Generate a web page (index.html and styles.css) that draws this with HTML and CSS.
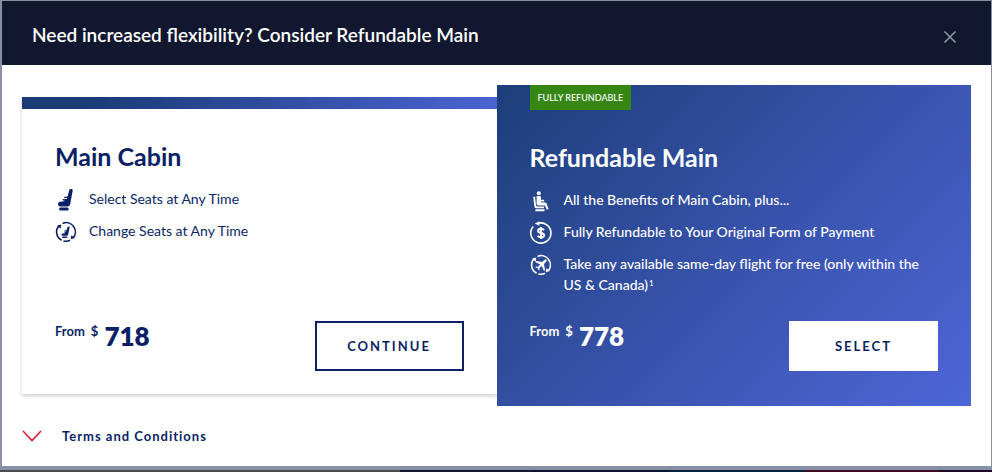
FILE: index.html
```html
<!DOCTYPE html>
<html lang="en">

<head>
    <meta charset="UTF-8">
    <meta name="viewport" content="width=device-width, initial-scale=1.0">
    <title>Refundable Main</title>
    <link rel="stylesheet" href="styles.css">
</head>

<body>
    <div class="modal" role="dialog" aria-labelledby="modal-title">
        <header class="modal-header">
            <h1 id="modal-title">Need increased flexibility? Consider Refundable Main</h1>
            <button class="close" type="button" aria-label="Close">
                <svg width="12" height="12" viewBox="0 0 12 12"><path d="M0.5 0.5 11.5 11.5M11.5 0.5 0.5 11.5" stroke="currentColor" stroke-width="1.5" fill="none"/></svg>
            </button>
        </header>
        <div class="modal-body">
            <div class="fares">
                <section class="fare fare-main">
                    <h2>Main Cabin</h2>
                    <ul>
                        <li>
                            <svg class="icon" viewBox="1 0 22 24">
                                <path d="M15.2 2.2C15.5 0.6 18.9 0.4 18.7 2.4L16.3 15.6C16 17.6 15.2 18.4 13.4 18.4H6.2C3.4 18.4 3.4 14 6.2 13.7L10.2 13.3 10.5 12.5H8.8V10.9H12.9L13.1 10.1H10.2V8.8H13.5Z"/>
                                <rect x="5.2" y="19.6" width="9.4" height="3" rx="1.3"/>
                            </svg>
                            <span>Select Seats at Any Time</span>
                        </li>
                        <li>
                            <svg class="icon" viewBox="1 0 22 24">
                                <path class="line" d="M5.4 5.4A9.2 9.2 0 0 0 7.6 20.2M8.6 3.4A9.2 9.2 0 0 1 19.2 17.8M9.4 20.9A9.2 9.2 0 0 0 16 20.3"/>
                                <path d="M3.2 5.6 7.4 4.6 6.5 8.8ZM20.9 18 16.7 19.3 17.4 15.2Z"/>
                                <path d="M13.4 7.2C13.6 6.2 15.8 6 15.6 7.3L14.2 14.4Q13.9 15.8 12.8 15.8H8.6C7.1 15.8 7.1 13.5 8.6 13.4L11 13.2 11.2 12.5H10.1V11.4H12.2L12.4 10.8H10.8V9.9H12.7Z"/>
                                <rect x="8" y="16.5" width="5.4" height="1.6" rx="0.8"/>
                            </svg>
                            <span>Change Seats at Any Time</span>
                        </li>
                    </ul>
                    <div class="fare-footer">
                        <p class="price"><span>From</span> <span>$</span> <strong>718</strong></p>
                        <button class="btn" type="button">CONTINUE</button>
                    </div>
                </section>
                <section class="fare fare-refundable">
                    <span class="badge">FULLY REFUNDABLE</span>
                    <h2>Refundable Main</h2>
                    <ul>
                        <li>
                            <svg class="icon" viewBox="1 0 22 24">
                                <circle cx="9.8" cy="4.2" r="2"/>
                                <path d="M7.6 7H11.2Q11.9 7 11.9 7.9V10.8H15.2V12.4H11.9V13.4H16.2Q17.3 13.4 17.6 14.4L19.6 20 17.8 20.7 15.8 16.6H9.3Q7.6 16.6 7.6 14.8Z"/>
                                <path d="M4.2 7.8H6.1L7 15.9Q7.2 17.6 8.9 17.6H15.1V19.3H7.2Q5.6 19.3 5.3 17.2ZM6.4 20.3H15.6V22.2H6.4Z"/>
                            </svg>
                            <span>All the Benefits of Main Cabin, plus...</span>
                        </li>
                        <li>
                            <svg class="icon" viewBox="1 0 22 24">
                                <path class="line" d="M4.2 5.4A10.1 10.1 0 1 0 9 2.3Q10.5 1.9 12 1.9"/>
                                <path d="M10.4 0.2V4.8L5.8 2.6Z"/>
                                <path class="dollar" d="M15 9.2C14.4 8.2 13.3 7.8 12 7.8 10.3 7.8 9.1 8.6 9.1 9.9 9.1 12.8 15.1 11.2 15.1 14.2 15.1 15.5 13.8 16.3 12.1 16.3 10.6 16.3 9.4 15.8 8.7 14.8M12 6V18"/>
                            </svg>
                            <span>Fully Refundable to Your Original Form of Payment</span>
                        </li>
                        <li>
                            <svg class="icon" viewBox="1 0 22 24">
                                <path class="line" d="M5.4 5.4A9.2 9.2 0 0 0 7.6 20.2M8.6 3.4A9.2 9.2 0 0 1 19.2 17.8M9.4 20.9A9.2 9.2 0 0 0 16 20.3"/>
                                <path d="M3.2 5.6 7.4 4.6 6.5 8.8ZM20.9 18 16.7 19.3 17.4 15.2Z"/>
                                <path d="M17.3 6.8C16.7 6.2 15.8 6.5 15.1 7.2L13.2 9.1 7.1 8.1 6.2 9 11.1 11.4 9.1 13.7 7 13.5 6.3 14.2 8.8 15.3 9.9 17.8 10.6 17.1 10.4 15 12.7 13 15.1 17.9 16 17 15 10.9 16.9 9C17.6 8.3 17.9 7.4 17.3 6.8Z"/>
                            </svg>
                            <span>Take any available same-day flight for free (only within the US &amp; Canada)<sup>1</sup></span>
                        </li>
                    </ul>
                    <div class="fare-footer">
                        <p class="price"><span>From</span> <span>$</span> <strong>778</strong></p>
                        <button class="btn" type="button">SELECT</button>
                    </div>
                </section>
            </div>
            <button class="terms" type="button" aria-expanded="false">
                <svg width="20" height="12" viewBox="0 0 20 12"><path d="M1 1 10 10.5 19 1" stroke="#e01933" stroke-width="1.6" fill="none"/></svg>
                Terms and Conditions
            </button>
        </div>
    </div>
    <div class="backdrop"></div>
</body>

</html>
```

FILE: styles.css
```css
* {
    box-sizing: border-box;
}

body {
    font-family: Lato, "Open Sans", sans-serif;
    color: #0b1f66;
    margin: 0;
    min-height: 100vh;
    display: flex;
    flex-direction: column;
}

h1, h2, ul, p {
    margin: 0;
    padding: 0;
}

button {
    font-family: inherit;
    color: inherit;
    border: none;
    background: none;
    padding: 0;
    cursor: pointer;
}

.modal {
    flex: 1;
    background-color: #fff;
    border: solid #868fa3;
    border-width: 1px 1px 4px 2px;
}

.modal-header {
    display: flex;
    align-items: center;
    justify-content: space-between;
    min-height: 64px;
    padding: 8px 35px 0 30px;
    background-color: #11172e;
    color: #fff;
}

.modal-header h1 {
    font-size: 19px;
    font-weight: 600;
    line-height: 24px;
    padding-bottom: 4px;
}

.close {
    display: flex;
    color: #929bad;
}

.modal-body {
    padding: 20px;
}

.fares {
    display: grid;
    grid-template-columns: 1fr 1fr;
    margin-bottom: 20px;
}

.fare {
    display: flex;
    flex-direction: column;
    align-items: flex-start;
    padding: 0 33px 35px;
}

.fare-main {
    margin: 12px 0;
    padding: 31px 33px 23px;
    border-top: 12px solid;
    border-image: linear-gradient(100deg, #1b3b77 15%, #4d66d6 92%) 12;
    border-image-width: 12px 0 0;
    box-shadow: 0 2px 4px rgba(0, 0, 0, 0.2);
}

.fare-refundable {
    position: relative;
    background: linear-gradient(135deg, #1c3e79, #3b55b1 58%, #4d66d8);
    color: #fff;
}

.badge {
    background-color: #368614;
    font-size: 9px;
    font-weight: 500;
    line-height: 25px;
    padding: 0 8px;
    margin-bottom: 31px;
}

.fare h2 {
    font-size: 25px;
    font-weight: 700;
    line-height: 32px;
    margin-bottom: 16px;
}

.fare ul {
    display: flex;
    flex-direction: column;
    gap: 11px;
    list-style: none;
    margin-bottom: 26px;
}

.fare li {
    display: flex;
    gap: 12px;
    font-size: 14px;
    line-height: 21px;
}

.fare-refundable li {
    font-weight: 500;
}

.icon {
    flex: none;
    width: 22px;
    height: 24px;
    margin-bottom: -3px;
    overflow: visible;
    fill: currentColor;
}

.icon .line {
    fill: none;
    stroke: currentColor;
    stroke-width: 1.6;
}

.icon .dollar {
    fill: none;
    stroke: currentColor;
    stroke-width: 2;
}

sup {
    font-size: 8px;
    line-height: 8px;
    vertical-align: 4px;
    margin-left: 1px;
}

.fare-footer {
    display: flex;
    align-items: flex-start;
    justify-content: space-between;
    width: 100%;
    margin-top: auto;
}

.price {
    display: flex;
    gap: 6px;
    font-size: 13px;
    font-weight: 700;
    line-height: 21px;
}

.price strong {
    font-size: 26px;
    font-weight: 800;
    line-height: 30px;
}

.btn {
    width: 149px;
    height: 50px;
    background-color: #fff;
    border: 2px solid #0b1f66;
    color: #0b1f66;
    font-size: 13px;
    font-weight: 700;
    letter-spacing: 2px;
}

.fare-refundable .btn {
    border-color: #fff;
}

.terms {
    display: flex;
    align-items: center;
    gap: 20px;
    font-size: 13px;
    font-weight: 700;
    letter-spacing: 1px;
    line-height: 20px;
}

/* sliver of the dimmed page under the dialog */
.backdrop {
    height: 2px;
    background: linear-gradient(to right, #4a4a4c 400px, #141a2c 400px 534px, #091430 534px 669px, #04203c 669px 804px, #3d0a20 804px 939px, #200828 939px);
}
```
